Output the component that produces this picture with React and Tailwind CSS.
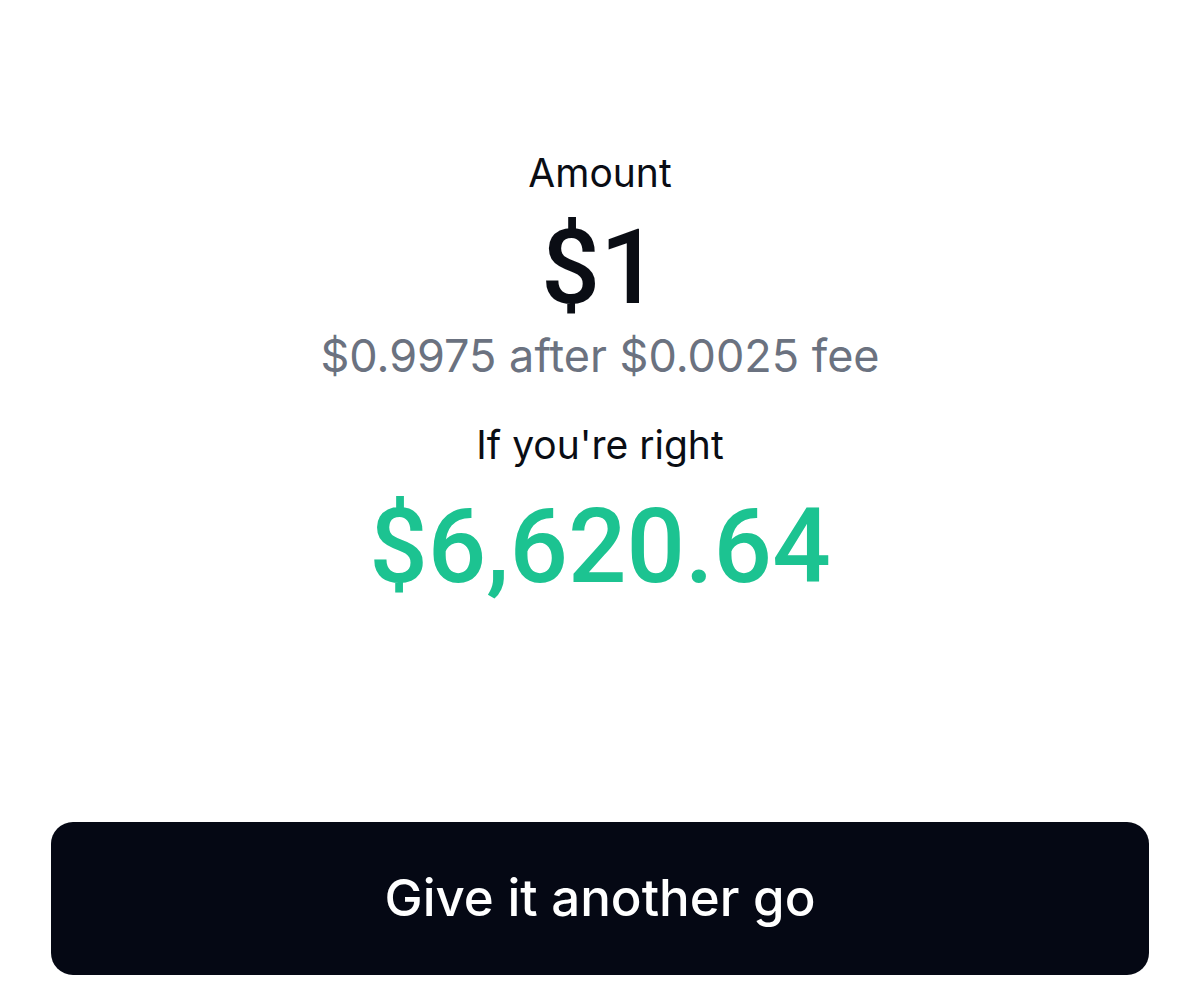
export default function App() {
  return (
    <div className="w-[1200px] h-[1001px] bg-white flex flex-col items-center" style={{ fontFamily: "Inter, 'Noto Sans', sans-serif" }}>
      <div className="flex flex-col items-center pt-[153px]">
        <div className="text-[39px] leading-none text-[#0a0d14]">Amount</div>
        <div className="mt-[24px] text-[104px] leading-none font-medium text-[#0a0d14] font-[Roboto,sans-serif]">$1</div>
        <div className="mt-[13px] text-[45px] leading-none text-[#6b7280]">$0.9975 after $0.0025 fee</div>
        <div className="mt-[47px] text-[39px] leading-none text-[#0a0d14]">If you're right</div>
        <div className="mt-[31px] text-[103px] leading-none font-medium text-[#1cc391] font-[Roboto,sans-serif]">$6,620.64</div>
      </div>
      <div className="flex-1" />
      <button className="mb-[26px] w-[1098px] h-[153px] rounded-[22px] bg-[#050814] text-white text-[51px] font-medium">
        Give it another go
      </button>
    </div>
  );
}
